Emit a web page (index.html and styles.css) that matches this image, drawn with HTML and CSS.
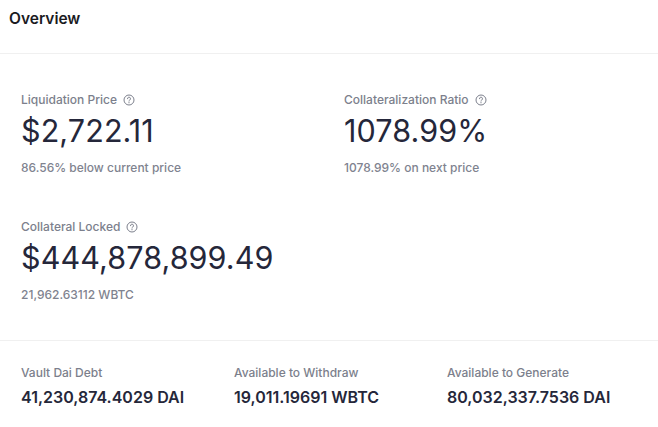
FILE: index.html
```html
<!DOCTYPE html>
<html>
<head>
<meta charset="utf-8">
<link rel="stylesheet" href="styles.css">
</head>
<body>
<div class="panel">
  <header class="head"><h1 class="title">Overview</h1></header>
  <section class="main">
    <div class="grid2">
      <div class="stat">
        <div class="label">Liquidation Price <svg class="q" viewBox="0 0 12 12"><circle cx="6" cy="6" r="5" fill="none" stroke="currentColor" stroke-width="1"/><path d="M4.5 4.7a1.5 1.5 0 1 1 2.2 1.3c-.5.3-.7.6-.7 1.1" fill="none" stroke="currentColor" stroke-width="1" stroke-linecap="round"/><circle cx="6" cy="8.7" r=".6" fill="currentColor"/></svg></div>
        <div class="value">$2,722.11</div>
        <div class="sub">86.56% below current price</div>
      </div>
      <div class="stat">
        <div class="label">Collateralization Ratio <svg class="q" viewBox="0 0 12 12"><circle cx="6" cy="6" r="5" fill="none" stroke="currentColor" stroke-width="1"/><path d="M4.5 4.7a1.5 1.5 0 1 1 2.2 1.3c-.5.3-.7.6-.7 1.1" fill="none" stroke="currentColor" stroke-width="1" stroke-linecap="round"/><circle cx="6" cy="8.7" r=".6" fill="currentColor"/></svg></div>
        <div class="value">1078.99%</div>
        <div class="sub">1078.99% on next price</div>
      </div>
      <div class="stat">
        <div class="label">Collateral Locked <svg class="q" viewBox="0 0 12 12"><circle cx="6" cy="6" r="5" fill="none" stroke="currentColor" stroke-width="1"/><path d="M4.5 4.7a1.5 1.5 0 1 1 2.2 1.3c-.5.3-.7.6-.7 1.1" fill="none" stroke="currentColor" stroke-width="1" stroke-linecap="round"/><circle cx="6" cy="8.7" r=".6" fill="currentColor"/></svg></div>
        <div class="value">$444,878,899.49</div>
        <div class="sub">21,962.63112 WBTC</div>
      </div>
    </div>
  </section>
  <section class="foot">
    <div class="mini">
      <div class="label">Vault Dai Debt</div>
      <div class="mval">41,230,874.4029 DAI</div>
    </div>
    <div class="mini">
      <div class="label">Available to Withdraw</div>
      <div class="mval">19,011.19691 WBTC</div>
    </div>
    <div class="mini">
      <div class="label">Available to Generate</div>
      <div class="mval">80,032,337.7536 DAI</div>
    </div>
  </section>
</div>
</body>
</html>
```
FILE: styles.css
```css
* { box-sizing: border-box; }
html, body { margin: 0; padding: 0; background: #fff; }
body { font-family: Inter, "Noto Sans", sans-serif; color: #25273a; }
.panel { width: 658px; height: 427px; overflow: hidden; }
.head { height: 54px; padding: 9px 9px 0; border-bottom: 1px solid #f0f0f0; }
.title { margin: 0; font-size: 15.5px; line-height: 20px; font-weight: 600; color: #1b1b1f; }
.main { padding: 38px 21px 37px; border-bottom: 1px solid #f0f0f0; }
.grid2 { display: grid; grid-template-columns: 293px 293px; column-gap: 30px; row-gap: 43px; }
.label { display: flex; align-items: center; gap: 6px; font-size: 12px; line-height: 16px; color: #7c7f8c; font-weight: 500; }
.q { width: 12px; height: 12px; color: #7c7f8c; }
.value { margin-top: 5px; font-size: 30.5px; line-height: 36px; font-weight: 400; color: #25273a; letter-spacing: 0.1px; }
.sub { margin-top: 11px; font-size: 12px; line-height: 16px; color: #80838f; font-weight: 500; }
.foot { display: grid; grid-template-columns: 190px 190px 190px; column-gap: 23px; padding: 24px 21px 0; }
.mval { margin-top: 6px; font-size: 16px; line-height: 20px; font-weight: 600; color: #25273a; }
```
